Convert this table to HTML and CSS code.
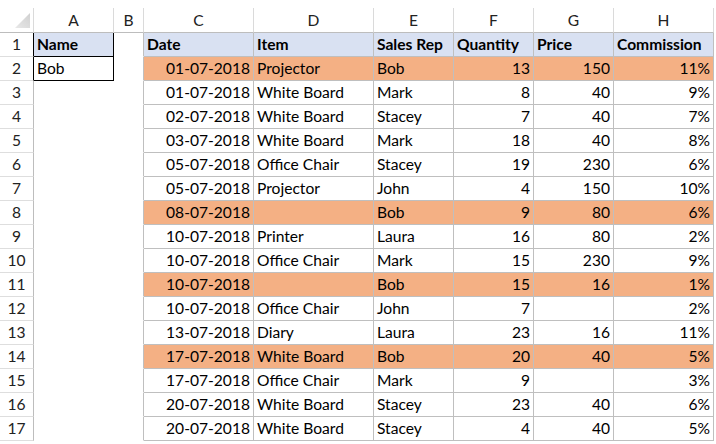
FILE: index.html
```html
<!DOCTYPE html>
<html>
<head>
<meta charset="utf-8">
<link rel="stylesheet" href="styles.css">
</head>
<body>
<div class="sheet">
  <div class="row hdr">
    <div class="c corner"><svg width="15" height="15" viewBox="0 0 15 15"><defs><linearGradient id="g" x1="0" y1="1" x2="1" y2="0"><stop offset="0" stop-color="#e8e8e8"/><stop offset="1" stop-color="#d0d0d0"/></linearGradient></defs><polygon points="15,0 15,15 0,15" fill="url(#g)"/></svg></div>
    <div class="c colh">A</div><div class="c colh">B</div><div class="c colh">C</div><div class="c colh">D</div><div class="c colh">E</div><div class="c colh">F</div><div class="c colh">G</div><div class="c colh">H</div>
  </div>
  <div class="row">
    <div class="c rh blk">1</div><div class="c a box blue b">Name</div><div class="c gap"></div>
    <div class="c t blue b">Date</div><div class="c t blue b">Item</div><div class="c t blue b">Sales Rep</div><div class="c t blue b">Quantity</div><div class="c t blue b">Price</div><div class="c t blue b">Commission</div>
  </div>
  <div class="row">
    <div class="c rh blk">2</div><div class="c a box">Bob</div><div class="c gap"></div>
    <div class="c t org r">01-07-2018</div><div class="c t org">Projector</div><div class="c t org">Bob</div><div class="c t org r">13</div><div class="c t org r">150</div><div class="c t org r">11%</div>
  </div>
  <div class="row">
    <div class="c rh">3</div><div class="c a"></div><div class="c gap"></div>
    <div class="c t r">01-07-2018</div><div class="c t">White Board</div><div class="c t">Mark</div><div class="c t r">8</div><div class="c t r">40</div><div class="c t r">9%</div>
  </div>
  <div class="row">
    <div class="c rh">4</div><div class="c a"></div><div class="c gap"></div>
    <div class="c t r">02-07-2018</div><div class="c t">White Board</div><div class="c t">Stacey</div><div class="c t r">7</div><div class="c t r">40</div><div class="c t r">7%</div>
  </div>
  <div class="row">
    <div class="c rh">5</div><div class="c a"></div><div class="c gap"></div>
    <div class="c t r">03-07-2018</div><div class="c t">White Board</div><div class="c t">Mark</div><div class="c t r">18</div><div class="c t r">40</div><div class="c t r">8%</div>
  </div>
  <div class="row">
    <div class="c rh">6</div><div class="c a"></div><div class="c gap"></div>
    <div class="c t r">05-07-2018</div><div class="c t">Office Chair</div><div class="c t">Stacey</div><div class="c t r">19</div><div class="c t r">230</div><div class="c t r">6%</div>
  </div>
  <div class="row">
    <div class="c rh">7</div><div class="c a"></div><div class="c gap"></div>
    <div class="c t r">05-07-2018</div><div class="c t">Projector</div><div class="c t">John</div><div class="c t r">4</div><div class="c t r">150</div><div class="c t r">10%</div>
  </div>
  <div class="row">
    <div class="c rh">8</div><div class="c a"></div><div class="c gap"></div>
    <div class="c t org r">08-07-2018</div><div class="c t org"></div><div class="c t org">Bob</div><div class="c t org r">9</div><div class="c t org r">80</div><div class="c t org r">6%</div>
  </div>
  <div class="row">
    <div class="c rh">9</div><div class="c a"></div><div class="c gap"></div>
    <div class="c t r">10-07-2018</div><div class="c t">Printer</div><div class="c t">Laura</div><div class="c t r">16</div><div class="c t r">80</div><div class="c t r">2%</div>
  </div>
  <div class="row">
    <div class="c rh">10</div><div class="c a"></div><div class="c gap"></div>
    <div class="c t r">10-07-2018</div><div class="c t">Office Chair</div><div class="c t">Mark</div><div class="c t r">15</div><div class="c t r">230</div><div class="c t r">9%</div>
  </div>
  <div class="row">
    <div class="c rh">11</div><div class="c a"></div><div class="c gap"></div>
    <div class="c t org r">10-07-2018</div><div class="c t org"></div><div class="c t org">Bob</div><div class="c t org r">15</div><div class="c t org r">16</div><div class="c t org r">1%</div>
  </div>
  <div class="row">
    <div class="c rh">12</div><div class="c a"></div><div class="c gap"></div>
    <div class="c t r">10-07-2018</div><div class="c t">Office Chair</div><div class="c t">John</div><div class="c t r">7</div><div class="c t r"></div><div class="c t r">2%</div>
  </div>
  <div class="row">
    <div class="c rh">13</div><div class="c a"></div><div class="c gap"></div>
    <div class="c t r">13-07-2018</div><div class="c t">Diary</div><div class="c t">Laura</div><div class="c t r">23</div><div class="c t r">16</div><div class="c t r">11%</div>
  </div>
  <div class="row">
    <div class="c rh">14</div><div class="c a"></div><div class="c gap"></div>
    <div class="c t org r">17-07-2018</div><div class="c t org">White Board</div><div class="c t org">Bob</div><div class="c t org r">20</div><div class="c t org r">40</div><div class="c t org r">5%</div>
  </div>
  <div class="row">
    <div class="c rh">15</div><div class="c a"></div><div class="c gap"></div>
    <div class="c t r">17-07-2018</div><div class="c t">Office Chair</div><div class="c t">Mark</div><div class="c t r">9</div><div class="c t r"></div><div class="c t r">3%</div>
  </div>
  <div class="row">
    <div class="c rh">16</div><div class="c a"></div><div class="c gap"></div>
    <div class="c t r">20-07-2018</div><div class="c t">White Board</div><div class="c t">Stacey</div><div class="c t r">23</div><div class="c t r">40</div><div class="c t r">6%</div>
  </div>
  <div class="row">
    <div class="c rh">17</div><div class="c a"></div><div class="c gap"></div>
    <div class="c t r">20-07-2018</div><div class="c t">White Board</div><div class="c t">Stacey</div><div class="c t r">4</div><div class="c t r">40</div><div class="c t r">5%</div>
  </div>
</div>
</body>
</html>
```
FILE: styles.css
```css
html, body {
  margin: 0;
  padding: 0;
  background: #ffffff;
}
.sheet {
  padding-top: 8px;
  font-family: Lato, "Open Sans", "Liberation Sans", sans-serif;
  font-size: 15.6px;
  color: #000000;
}
.row {
  display: grid;
  grid-template-columns: 34px 80px 30px 110px 120px 80px 80px 80px 100px;
  height: 24px;
}
.row.hdr {
  height: 25px;
}
.c {
  box-sizing: border-box;
  border-right: 1px solid transparent;
  border-bottom: 1px solid transparent;
  line-height: 23px;
  padding: 0 3px 0 3px;
  white-space: nowrap;
  overflow: hidden;
}
.hdr .c {
  line-height: 24px;
  border-right-color: #dadada;
  border-bottom-color: #bdbdbd;
  text-align: center;
  color: #222222;
}
.corner {
  display: flex;
  justify-content: flex-end;
  align-items: flex-end;
  padding: 0 3px 4px 0;
}
.corner svg {
  display: block;
}
.rh {
  text-align: center;
  color: #222222;
  border-right-color: #bdbdbd;
  border-bottom-color: #dedede;
  padding: 0;
}
.rh.blk {
  border-right-color: #000000;
}
.a.box {
  border-right-color: #000000;
  border-bottom-color: #000000;
}
.gap {
  border-right-color: #bfbfbf;
}
.t {
  border-right-color: #bfbfbf;
  border-bottom-color: #bfbfbf;
}
.blue {
  background: #d9e1f2;
}
.org {
  background: #f4b084;
}
.b {
  font-weight: 700;
}
.r {
  text-align: right;
}
```
